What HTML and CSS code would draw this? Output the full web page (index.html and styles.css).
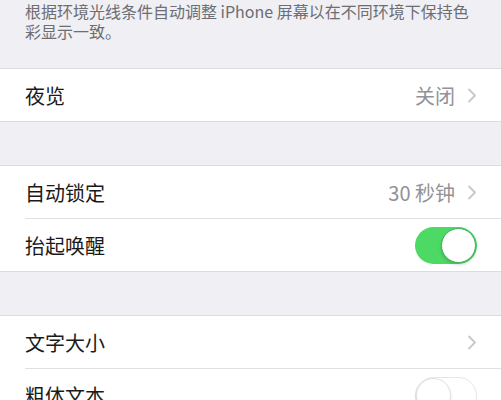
FILE: index.html
```html
<!DOCTYPE html>
<html lang="zh-CN">
<head>
<meta charset="utf-8">
<link rel="stylesheet" href="styles.css">
</head>
<body>
<div class="note">根据环境光线条件自动调整 iPhone 屏幕以在不同环境下保持色彩显示一致。</div>

<div class="group">
  <div class="row">
    <span class="label">夜览</span>
    <span class="detail"><span class="value">关闭</span><svg class="chev" width="10" height="15" viewBox="0 0 10 15"><path d="M2 1.5 L8 7.5 L2 13.5" fill="none" stroke="#c7c7cc" stroke-width="1.8" stroke-linecap="round" stroke-linejoin="round"/></svg></span>
  </div>
</div>

<div class="group">
  <div class="row">
    <span class="label">自动锁定</span>
    <span class="detail"><span class="value">30 秒钟</span><svg class="chev" width="10" height="15" viewBox="0 0 10 15"><path d="M2 1.5 L8 7.5 L2 13.5" fill="none" stroke="#c7c7cc" stroke-width="1.8" stroke-linecap="round" stroke-linejoin="round"/></svg></span>
  </div>
  <div class="row">
    <span class="label">抬起唤醒</span>
    <span class="switch on"><span class="knob"></span></span>
  </div>
</div>

<div class="group">
  <div class="row">
    <span class="label">文字大小</span>
    <span class="detail"><svg class="chev" width="10" height="15" viewBox="0 0 10 15"><path d="M2 1.5 L8 7.5 L2 13.5" fill="none" stroke="#c7c7cc" stroke-width="1.8" stroke-linecap="round" stroke-linejoin="round"/></svg></span>
  </div>
  <div class="row">
    <span class="label">粗体文本</span>
    <span class="switch off"><span class="knob"></span></span>
  </div>
</div>
</body>
</html>
```

FILE: styles.css
```css
html, body {
  margin: 0;
  padding: 0;
  background: #efeff4;
  font-family: "Noto Sans CJK SC", "Noto Sans", sans-serif;
  overflow: hidden;
}

.note {
  padding: 1px 25px 0 25px;
  height: 68px;
  box-sizing: border-box;
  font-size: 16px;
  line-height: 20px;
  color: #6d6d72;
}

.group {
  background: #fff;
  border-top: 1px solid #dcdce0;
  border-bottom: 1px solid #dcdce0;
  margin-bottom: 43px;
}

.row {
  height: 52px;
  margin-left: 25px;
  padding-right: 24px;
  display: flex;
  align-items: center;
  justify-content: space-between;
}

.row + .row {
  border-top: 1px solid #e0e0e4;
}

.label {
  font-size: 20px;
  color: #1a1a1a;
}

.detail {
  display: flex;
  align-items: center;
  gap: 12px;
}

.value {
  font-size: 20px;
  color: #929297;
}

.chev {
  display: block;
}

.switch {
  width: 62px;
  height: 37px;
  border-radius: 19px;
  box-sizing: border-box;
  display: flex;
  align-items: center;
}

.switch.on {
  background: #4cd964;
  justify-content: flex-end;
}

.switch.off {
  background: #fff;
  border: 1.5px solid #e5e5ea;
  justify-content: flex-start;
}

.knob {
  width: 35px;
  height: 35px;
  border-radius: 50%;
  background: #fff;
  box-sizing: border-box;
}

.switch.on .knob {
  margin-right: 1px;
  border: 1px solid #3fae55;
  box-shadow: 0 2px 3px rgba(0,0,0,0.15);
}

.switch.off .knob {
  border: 1px solid #e0e0e4;
  box-shadow: 0 2px 3px rgba(0,0,0,0.12);
}
```
